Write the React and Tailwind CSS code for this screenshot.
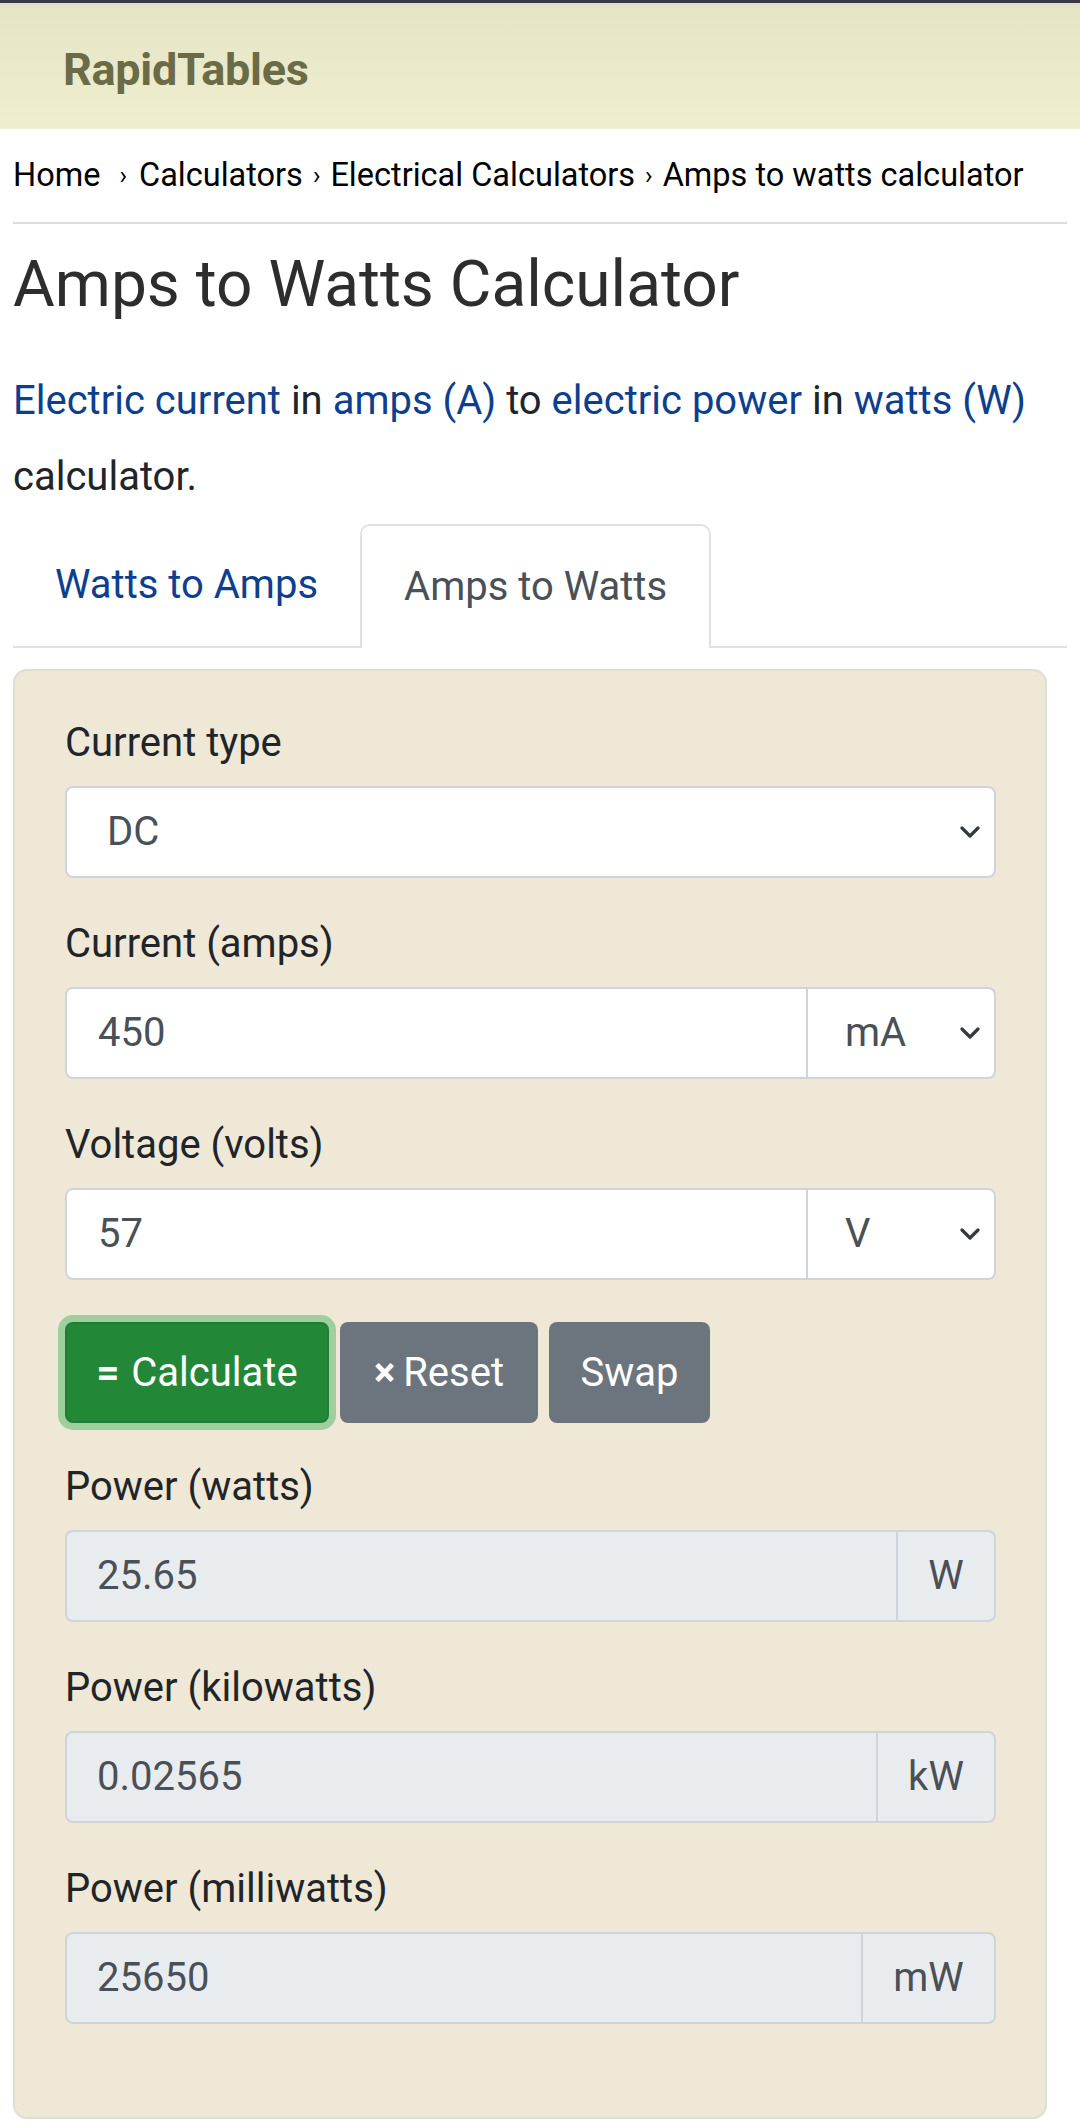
import React from 'react';

const Chevron = () => (
    <svg className="absolute right-[14px] top-1/2 -translate-y-1/2" width="20" height="12" viewBox="0 0 20 12" fill="none">
        <polyline points="2,2 10,10 18,2" stroke="#343a40" strokeWidth="3.2" strokeLinecap="round" strokeLinejoin="round" />
    </svg>
);

const Label = ({ children }) => (
    <div className="h-[63px] leading-[63px] mb-[12px] text-[40px] text-[#212529]">{children}</div>
);

const InputWithUnit = ({ value, unit }) => (
    <div className="flex h-[92px]">
        <div className="flex-1 flex items-center pl-[31px] bg-white border-2 border-[#ced4da] rounded-l-[8px] text-[40px] text-[#495057]">
            {value}
        </div>
        <div className="relative w-[188px] flex items-center pl-[37px] bg-white border-2 border-l-0 border-[#ced4da] rounded-r-[8px] text-[40px] text-[#495057]">
            {unit}
            <Chevron />
        </div>
    </div>
);

const Output = ({ value, unit, unitWidth }) => (
    <div className="flex h-[92px] bg-[#e9ecef] border-2 border-[#ced4da] rounded-[8px] text-[40px] text-[#495057]">
        <div className="flex-1 flex items-center pl-[30px]">{value}</div>
        <div className={`flex items-center justify-center border-l-2 border-[#ced4da] ${unitWidth}`}>{unit}</div>
    </div>
);

const App = () => {
    const link = 'text-[#0e3f8f]';

    return (
        <div className="min-h-screen bg-white font-['Roboto','Noto_Sans',sans-serif] text-[#212529]">
            {/* Top bars + header */}
            <div className="h-[3px] bg-[#3a3a42]" />
            <div className="h-[2px] bg-[#dcdcd0]" />
            <header className="h-[124px] bg-gradient-to-b from-[#e5e4c5] to-[#efeecf] flex items-center pl-[63px] pt-[6px]">
                <span className="text-[45px] font-bold text-[#6b6b48] tracking-[-0.3px]">RapidTables</span>
            </header>

            <main className="px-[13px]">
                {/* Breadcrumb */}
                <nav className="h-[95px] flex items-center border-b-2 border-[#dcdcdc] text-[32.5px] text-black whitespace-nowrap">
                    <span>Home</span>
                    <span className="ml-[19px] mr-[12px] text-[25px]">›</span>
                    <span>Calculators</span>
                    <span className="mx-[10px] text-[25px]">›</span>
                    <span>Electrical Calculators</span>
                    <span className="mx-[10px] text-[25px]">›</span>
                    <span>Amps to watts calculator</span>
                </nav>

                <h1 className="mt-[23px] text-[64px] leading-[76px] font-normal text-[#2d2d2d]">Amps to Watts Calculator</h1>

                <p className="mt-[40px] text-[40px] leading-[76px] text-[#212529]">
                    <span className={link}>Electric current</span> in <span className={link}>amps (A)</span> to{' '}
                    <span className={link}>electric power</span> in <span className={link}>watts (W)</span> calculator.
                </p>

                {/* Tabs */}
                <div className="mt-[9px] flex border-b-2 border-[#dee2e6] text-[40px]">
                    <div className={`h-[122px] px-[42px] flex items-center ${link}`}>Watts to Amps</div>
                    <div className="h-[124px] -mb-[2px] px-[42px] flex items-center bg-white border-2 border-b-0 border-[#dee2e6] rounded-t-[10px] text-[#495057]">
                        Amps to Watts
                    </div>
                </div>

                {/* Calculator card */}
                <div className="mt-[21px] mr-[20px] bg-[#efe8d6] border-2 border-[#e0ddd4] rounded-[14px] pl-[50px] pr-[49px] pt-[40px] pb-[93px]">
                    <Label>Current type</Label>
                    <div className="relative h-[92px] flex items-center pl-[40px] bg-white border-2 border-[#ced4da] rounded-[8px] text-[40px] text-[#495057] mb-[34px]">
                        DC
                        <Chevron />
                    </div>

                    <Label>Current (amps)</Label>
                    <div className="mb-[34px]">
                        <InputWithUnit value="450" unit="mA" />
                    </div>

                    <Label>Voltage (volts)</Label>
                    <InputWithUnit value="57" unit="V" />

                    {/* Buttons */}
                    <div className="mt-[42px] flex gap-[11px] text-[40px] text-white">
                        <button className="w-[264px] h-[101px] rounded-[8px] bg-[#228838] border-2 border-[#1e7e34] ring-[7px] ring-[#9fcf9c] flex items-center justify-center">
                            <span className="font-bold mr-[12px]">=</span>Calculate
                        </button>
                        <button className="w-[198px] h-[101px] rounded-[8px] bg-[#6c757d] flex items-center justify-center">
                            <span className="font-bold mr-[8px]">×</span>Reset
                        </button>
                        <button className="w-[161px] h-[101px] rounded-[8px] bg-[#6c757d] flex items-center justify-center">
                            Swap
                        </button>
                    </div>

                    <div className="mt-[32px]">
                        <Label>Power (watts)</Label>
                        <Output value="25.65" unit="W" unitWidth="w-[98px]" />
                    </div>
                    <div className="mt-[34px]">
                        <Label>Power (kilowatts)</Label>
                        <Output value="0.02565" unit="kW" unitWidth="w-[118px]" />
                    </div>
                    <div className="mt-[34px]">
                        <Label>Power (milliwatts)</Label>
                        <Output value="25650" unit="mW" unitWidth="w-[133px]" />
                    </div>
                </div>
            </main>
        </div>
    );
};

export default App;
